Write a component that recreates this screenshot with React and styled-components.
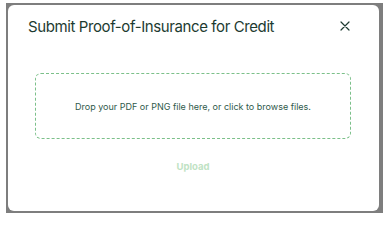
import React from "react";
import styled, { createGlobalStyle } from "styled-components";

const Global = createGlobalStyle`
  html, body {
    margin: 0;
    padding: 0;
    background: #ffffff;
  }
  body {
    font-family: Inter, "Liberation Sans", sans-serif;
  }
`

const Overlay = styled.div`
  width: 377px;
  height: 210px;
  margin: 3px 0 0 6px;
  padding: 2px 4px 2px 2px;
  box-sizing: border-box;
  background-color: #7e7e7e;
`

const Modal = styled.div`
  height: 100%;
  background-color: #fff;
  border-radius: 6px;
  display: flex;
  flex-direction: column;
`

const Header = styled.div`
  display: flex;
  align-items: center;
  justify-content: space-between;
  padding: 9px 28px 0 20px;
  height: 24px;
`

const Title = styled.h2`
  margin: 0;
  font-size: 15px;
  font-weight: 400;
  letter-spacing: -0.4px;
  color: #1d3b31;
`

const Close = styled.button`
  border: none;
  background: none;
  padding: 0;
  width: 12px;
  height: 12px;
  display: flex;
  color: #1d3b31;
  cursor: pointer;
`

const Body = styled.div`
  padding: 35px 28px 0 27px;
  display: flex;
  flex-direction: column;
  align-items: center;
`

const Dropzone = styled.div`
  width: 100%;
  height: 66px;
  box-sizing: border-box;
  border: 1px dashed #7cc08a;
  border-radius: 6px;
  display: flex;
  align-items: center;
  justify-content: center;
  font-size: 9px;
  color: #2f5a4b;
  cursor: pointer;
`

const Upload = styled.button`
  margin-top: 22px;
  border: none;
  background: none;
  padding: 0;
  font-family: inherit;
  font-size: 9.5px;
  font-weight: 700;
  color: #bfe3c4;
`

export default function App() {
  return (
    <>
      <Global />
      <Overlay>
        <Modal>
          <Header>
            <Title>Submit Proof-of-Insurance for Credit</Title>
            <Close aria-label="Close">
              <svg width="12" height="12" viewBox="0 0 12 12">
                <path d="M2 2 L10 10 M10 2 L2 10" stroke="currentColor" strokeWidth="1.2" strokeLinecap="round" />
              </svg>
            </Close>
          </Header>
          <Body>
            <Dropzone>Drop your PDF or PNG file here, or click to browse files.</Dropzone>
            <Upload disabled>Upload</Upload>
          </Body>
        </Modal>
      </Overlay>
    </>
  )
}
